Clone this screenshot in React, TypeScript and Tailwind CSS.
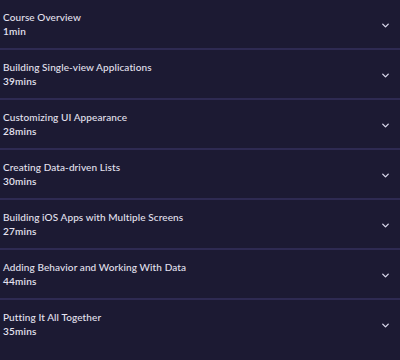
import { ChevronDown } from 'lucide-react'

interface Lesson {
  title: string
  duration: string
}

const lessons: Lesson[] = [
  { title: 'Course Overview', duration: '1min' },
  { title: 'Building Single-view Applications', duration: '39mins' },
  { title: 'Customizing UI Appearance', duration: '28mins' },
  { title: 'Creating Data-driven Lists', duration: '30mins' },
  { title: 'Building iOS Apps with Multiple Screens', duration: '27mins' },
  { title: 'Adding Behavior and Working With Data', duration: '44mins' },
  { title: 'Putting It All Together', duration: '35mins' },
]

export default function App() {
  return (
    <div
      className="w-[400px] h-[360px] bg-[#1c1a33] text-[#e4e2f0] overflow-hidden"
      style={{ fontFamily: 'Lato, "Noto Sans", sans-serif' }}
    >
      {lessons.map((lesson, i) => (
        <div
          key={lesson.title}
          className={`h-[50px] flex justify-between pl-[3px] pr-[9px] ${
            i < lessons.length - 1 ? 'border-b-2 border-[#2e2a52]' : ''
          }`}
        >
          <div className="pt-[10px]">
            <div className="text-[10px] leading-[14px] font-medium tracking-[0.1px]">{lesson.title}</div>
            <div className="text-[10px] leading-[14px] font-semibold tracking-[0.2px]">{lesson.duration}</div>
          </div>
          <ChevronDown className="mt-[20px] w-[11px] h-[11px] text-[#d8d6ea]" strokeWidth={3} />
        </div>
      ))}
    </div>
  )
}
